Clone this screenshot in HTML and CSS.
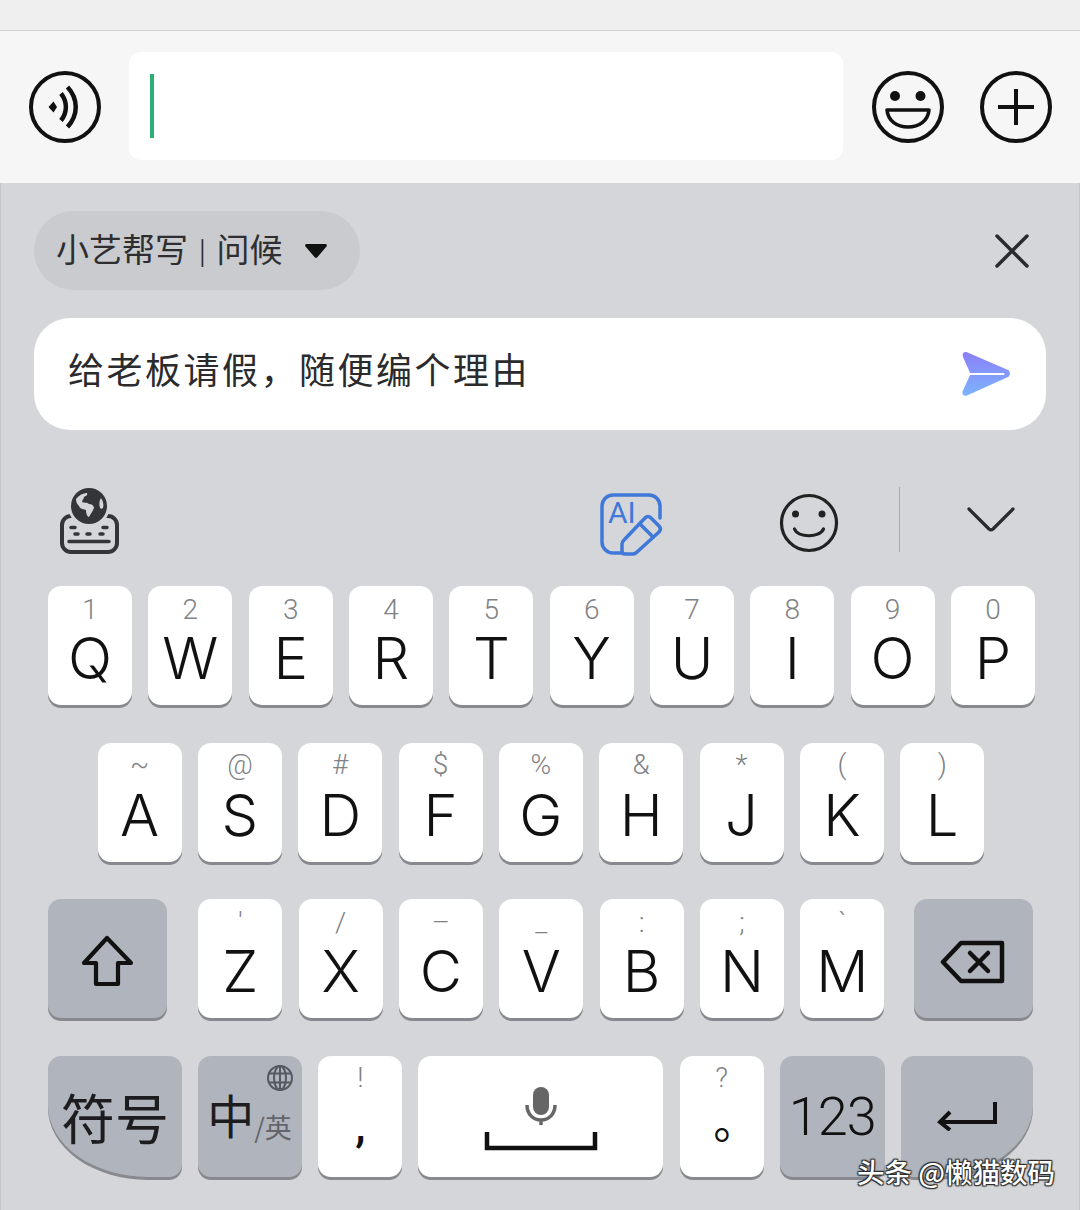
FILE: index.html
```html
<!DOCTYPE html>
<html lang="zh-CN">
<head>
    <meta charset="UTF-8">
    <meta name="viewport" content="width=device-width, initial-scale=1.0">
    <title>小艺帮写</title>
    <link rel="stylesheet" href="styles.css">
</head>
<body>
    <div class="top-strip"></div>

    <div class="chat-bar">
        <svg class="bar-icon voice" width="74" height="74" viewBox="0 0 74 74" fill="none" stroke="#111" stroke-width="4">
            <circle cx="37" cy="37" r="34"/>
            <path d="M25.500 31.500l3.500 5.500-3.500 5.500-5-5.500z" fill="#111" stroke="none"/>
            <path d="M33 23.500c6.500 8 6.500 19 0 27" stroke-width="4.500"/>
            <path d="M39.500 17c11 12 11 28 0 40" stroke-width="4.500"/>
        </svg>
        <div class="input-box"><span class="cursor"></span></div>
        <svg class="bar-icon grin" width="74" height="74" viewBox="0 0 74 74" fill="none" stroke="#111" stroke-width="4">
            <circle cx="37" cy="37" r="34"/>
            <circle cx="24" cy="26" r="5" fill="#111" stroke="none"/>
            <circle cx="49.500" cy="26" r="5" fill="#111" stroke="none"/>
            <path d="M16 40h42c-1 11-10 17-21 17s-20-6-21-17z" stroke-linejoin="round" stroke-width="3.500"/>
        </svg>
        <svg class="bar-icon plus" width="74" height="74" viewBox="0 0 74 74" fill="none" stroke="#111" stroke-width="4">
            <circle cx="37" cy="37" r="34"/>
            <path d="M19 37h36M37 19v36"/>
        </svg>
    </div>

    <div class="keyboard">
        <div class="assist-head">
            <div class="chip">
                <span class="chip-text">小艺帮写 <span class="chip-sep">|</span> 问候</span>
                <svg width="22" height="14" viewBox="0 0 22 14"><path d="M1.500 0h19a1.500 1.500 0 0 1 1 2.500L12.500 13a2 2 0 0 1-3 0L.5 2.500A1.500 1.500 0 0 1 1.500 0z" fill="#111"/></svg>
            </div>
            <svg class="close-icon" width="36" height="36" viewBox="0 0 36 36" fill="none" stroke="#2b2b2d" stroke-width="3.500" stroke-linecap="round">
                <path d="M3 3l30 30M33 3L3 33"/>
            </svg>
        </div>

        <div class="prompt">
            <span class="prompt-text">给老板请假，随便编个理由</span>
            <svg width="50" height="44" viewBox="0 0 50 44">
                <defs>
                    <linearGradient id="sendFill" x1="0" y1="0" x2="0" y2="1">
                        <stop offset="0" stop-color="#8a7ff6"/>
                        <stop offset="1" stop-color="#7db4ff"/>
                    </linearGradient>
                </defs>
                <path d="M1 1.500C2 0 3.500-.3 5 .3L46 18c2.500 1.200 2.500 5.800 0 7L5 43.500C3.200 44.300 1 43.500.5 41.500c-.2-1 0-2 .5-3L8.500 22 1 5c-.4-1.200-.4-2.500 0-3.500z" fill="url(#sendFill)"/>
                <path d="M8.500 22h33" stroke="#ffffff" stroke-width="2" stroke-linecap="round"/>
            </svg>
        </div>

        <div class="toolbar">
            <svg class="tool-kbd" width="62" height="68" viewBox="0 0 62 68" fill="none">
                <rect x="4" y="29" width="55" height="36" rx="9" stroke="#333538" stroke-width="4"/>
                <circle cx="31" cy="19" r="21" fill="#d4d6da"/>
                <circle cx="31" cy="19" r="18" fill="#333538"/>
                <path d="M18 12c3-4 7-6 11-6 1 2-1 3-3 4 0 2-2 3-2 5 2 1 5 0 7 2 3 0 5 2 5 4-1 3-3 5-5 9-2 0-3-4-3-7-3-1-6-1-7-4-2-2-3-4-3-7z" fill="#d4d6da"/>
                <path d="M43 11c2 3 3 6 2 10-1 1-2 1-3 0-1-4-1-7 1-10z" fill="#d4d6da"/>
                <path d="M13 40.500h4M45 40.500h4M17 47h3M29 47h3M42 47h3M11 54.500h40" stroke="#333538" stroke-width="3.500" stroke-linecap="round"/>
            </svg>
            <svg class="tool-ai" width="66" height="64" viewBox="0 0 66 64" fill="none" stroke="#3f78d9" stroke-width="3.500" stroke-linecap="round" stroke-linejoin="round">
                <path d="M22 60H13A11 11 0 0 1 2 49V13A11 11 0 0 1 13 2h36a11 11 0 0 1 11 11v12"/>
                <text class="ai-text" x="8" y="30">AI</text>
                <path d="M24 47l21-22c2-2 4-2 6 0l8 8c2 2 2 4 0 6L37 59c-1 1-2 2-4 2h-8c-2 0-3-1-3-3v-7c0-2 1-3 2-4z"/>
                <path d="M40 31l13 13"/>
            </svg>
            <svg class="tool-smile" width="60" height="60" viewBox="0 0 60 60" fill="none" stroke="#222" stroke-width="3.200" stroke-linecap="round">
                <circle cx="30" cy="30" r="27.500"/>
                <circle cx="16.500" cy="21" r="3.500" fill="#222" stroke="none"/>
                <circle cx="43" cy="21" r="3.500" fill="#222" stroke="none"/>
                <path d="M15.500 36c3.500 9 25 9 29 0"/>
            </svg>
            <span class="tool-line"></span>
            <svg class="tool-down" width="48" height="26" viewBox="0 0 48 26" fill="none" stroke="#2b2b2d" stroke-width="3.200" stroke-linecap="round" stroke-linejoin="round">
                <path d="M2 3l20 20c1.200 1 2.800 1 4 0L46 3"/>
            </svg>
        </div>

        <div class="keys">
            <div class="key-row">
                <div class="key"><span class="sub">1</span><span class="main">Q</span></div>
                <div class="key"><span class="sub">2</span><span class="main">W</span></div>
                <div class="key"><span class="sub">3</span><span class="main">E</span></div>
                <div class="key"><span class="sub">4</span><span class="main">R</span></div>
                <div class="key"><span class="sub">5</span><span class="main">T</span></div>
                <div class="key"><span class="sub">6</span><span class="main">Y</span></div>
                <div class="key"><span class="sub">7</span><span class="main">U</span></div>
                <div class="key"><span class="sub">8</span><span class="main">I</span></div>
                <div class="key"><span class="sub">9</span><span class="main">O</span></div>
                <div class="key"><span class="sub">0</span><span class="main">P</span></div>
            </div>
            <div class="key-row row-mid">
                <div class="key"><span class="sub">~</span><span class="main">A</span></div>
                <div class="key"><span class="sub">@</span><span class="main">S</span></div>
                <div class="key"><span class="sub">#</span><span class="main">D</span></div>
                <div class="key"><span class="sub">$</span><span class="main">F</span></div>
                <div class="key"><span class="sub">%</span><span class="main">G</span></div>
                <div class="key"><span class="sub">&amp;</span><span class="main">H</span></div>
                <div class="key"><span class="sub">*</span><span class="main">J</span></div>
                <div class="key"><span class="sub">(</span><span class="main">K</span></div>
                <div class="key"><span class="sub">)</span><span class="main">L</span></div>
            </div>
            <div class="key-row">
                <div class="key fn shift">
                    <svg width="54" height="52" viewBox="0 0 54 52" fill="none" stroke="#111" stroke-width="4.200" stroke-linejoin="round">
                        <path d="M26 3L3 28h12v21h22V28h13z"/>
                    </svg>
                </div>
                <div class="key"><span class="sub">'</span><span class="main">Z</span></div>
                <div class="key"><span class="sub">/</span><span class="main">X</span></div>
                <div class="key"><span class="sub">–</span><span class="main">C</span></div>
                <div class="key"><span class="sub">_</span><span class="main">V</span></div>
                <div class="key"><span class="sub">:</span><span class="main">B</span></div>
                <div class="key"><span class="sub">;</span><span class="main">N</span></div>
                <div class="key"><span class="sub">`</span><span class="main">M</span></div>
                <div class="key fn back">
                    <svg width="66" height="44" viewBox="0 0 66 44" fill="none" stroke="#111" stroke-width="4.500" stroke-linejoin="round" stroke-linecap="round">
                        <path d="M21 3h41v38H21L3 22z"/>
                        <path d="M30 13l18 18M48 13L30 31"/>
                    </svg>
                </div>
            </div>
            <div class="key-row row-last">
                <div class="key fn symbols">符号</div>
                <div class="key fn lang">
                    <svg class="lang-globe" width="28" height="28" viewBox="0 0 28 28" fill="none" stroke="#555960" stroke-width="2">
                        <circle cx="14" cy="14" r="12"/>
                        <ellipse cx="14" cy="14" rx="6" ry="12"/>
                        <path d="M14 2v24M3 9.500h22M3 18.500h22"/>
                    </svg>
                    <span class="lang-main">中</span><span class="lang-alt">/英</span>
                </div>
                <div class="key"><span class="sub sub-tall">!</span><span class="punct">,</span></div>
                <div class="key space">
                    <svg width="116" height="66" viewBox="0 0 116 66" fill="none">
                        <rect x="50" y="2" width="16" height="28" rx="8" fill="#666"/>
                        <path d="M44 20c0 9 6 15 14 15s14-6 14-15M58 35v5" stroke="#666" stroke-width="3.500"/>
                        <path d="M4 47v16h108V47" stroke="#111" stroke-width="4.500"/>
                    </svg>
                </div>
                <div class="key"><span class="sub sub-tall">?</span><span class="punct stop">。</span></div>
                <div class="key fn num">123</div>
                <div class="key fn enter">
                    <svg width="60" height="30" viewBox="0 0 60 30" fill="none" stroke="#111" stroke-width="4" stroke-linejoin="miter">
                        <path d="M58 1v20H4"/>
                        <path d="M13 11L3 21l10 8"/>
                    </svg>
                </div>
            </div>
        </div>

        <div class="watermark">头条 @懒猫数码</div>
    </div>
</body>
</html>
```

FILE: styles.css
```css
body {
    margin: 0;
    padding: 0;
    width: 1080px;
    height: 1210px;
    overflow: hidden;
    font-family: "Noto Sans CJK SC", "Noto Sans", sans-serif;
    background-color: #d4d6da;
}

.top-strip {
    height: 30px;
    background: #efefef;
    border-bottom: 1px solid #d2d2d2;
}

/* chat input */
.chat-bar {
    height: 152px;
    background: #f6f6f6;
    display: flex;
    align-items: center;
    box-sizing: border-box;
    padding-left: 28px;
}

.bar-icon {
    flex: none;
}

.input-box {
    width: 714px;
    height: 108px;
    margin: 0 28px 2px 27px;
    background: #ffffff;
    border-radius: 12px;
    display: flex;
    align-items: center;
    padding-left: 21px;
    box-sizing: border-box;
}

.cursor {
    width: 4px;
    height: 64px;
    background: #2fae74;
}

.plus {
    margin-left: 34px;
}

/* keyboard panel */
.keyboard {
    position: relative;
    height: 1027px;
    background: #d4d6da;
    box-shadow: inset 1px 0 0 #c4c6ca, inset -1px 0 0 #c4c6ca;
}

.assist-head {
    height: 135px;
    box-sizing: border-box;
    padding: 28px 50px 0 34px;
    display: flex;
    justify-content: space-between;
    align-items: flex-start;
}

.chip {
    width: 326px;
    height: 79px;
    box-sizing: border-box;
    padding-left: 22px;
    background: #c9cbcf;
    border-radius: 40px;
    display: flex;
    align-items: center;
}

.chip-text {
    font-size: 33px;
    word-spacing: 2px;
    color: #2e2e30;
    width: 249px;
    white-space: pre;
    padding-bottom: 5px;
}

.chip-sep {
    font-size: 25px;
    margin: 0 1.5px;
    vertical-align: 2px;
}

.close-icon {
    margin-top: 22px;
}

.prompt {
    width: 1012px;
    height: 112px;
    margin-left: 34px;
    box-sizing: border-box;
    padding: 0 34px;
    background: #ffffff;
    border-radius: 36px;
    display: flex;
    align-items: center;
    justify-content: space-between;
}

.prompt-text {
    font-size: 36px;
    letter-spacing: 2.5px;
    color: #2b2b2d;
    padding-bottom: 12px;
}

.toolbar {
    height: 156px;
    box-sizing: border-box;
    padding: 57px 0 0 58px;
    display: flex;
    align-items: flex-start;
}

.tool-ai {
    margin-left: 480px;
    margin-top: 6px;
}

.tool-smile {
    margin-left: 113px;
    margin-top: 6px;
}

.tool-line {
    width: 1px;
    height: 65px;
    background: #a9abaf;
    margin-left: 60px;
}

.tool-down {
    margin-left: 67px;
    margin-top: 19px;
}

.ai-text {
    font-family: Roboto, sans-serif;
    font-size: 30px;
    font-weight: 400;
    fill: #3f78d9;
    stroke: none;
}

/* key grid */
.keys {
    display: flex;
    flex-direction: column;
    gap: 34.67px;
    padding-left: 48px;
}

.key-row {
    display: flex;
    gap: 16.33px;
    height: 122px;
}

.row-mid {
    padding-left: 49.6px;
}

.row-mid .sub {
    margin-top: 6px;
    margin-bottom: 2px;
}

.row-last {
    gap: 16.17px;
    height: 124px;
}

.key {
    width: 84px;
    height: 119px;
    flex: none;
    background: #ffffff;
    border-radius: 13px;
    box-shadow: 0 3px 0 #87898e;
    display: flex;
    flex-direction: column;
    align-items: center;
    font-family: Roboto, "Noto Sans CJK SC", sans-serif;
    color: #111;
}

.row-last .key {
    height: 121px;
}

.sub {
    height: 31px;
    margin-top: 8px;
    font-size: 28px;
    line-height: 31px;
    font-weight: 300;
    color: #808285;
}

.sub-tall {
    margin-top: 6px;
}

.main {
    font-family: Inter, Roboto, sans-serif;
    font-size: 58px;
    line-height: 67px;
    font-weight: 300;
}

.punct {
    font-size: 46px;
    line-height: 54px;
    font-weight: 500;
    margin-top: 5px;
}

.stop {
    font-family: "Noto Sans CJK TC", sans-serif;
    font-size: 44px;
    font-weight: 400;
    margin-top: 13px;
}

.fn {
    background: #b0b4bd;
    justify-content: center;
    align-items: center;
}

.shift {
    width: 119px;
    margin-right: 15px;
    padding-top: 4px;
    box-sizing: border-box;
}

.back {
    width: 119px;
    margin-left: 13px;
    padding-top: 6px;
    box-sizing: border-box;
}

.symbols {
    width: 134px;
    font-family: "Noto Sans CJK SC", sans-serif;
    font-size: 54px;
    font-weight: 400;
    color: #1d1d1f;
    border-bottom-left-radius: 100px 72px;
}

.lang {
    width: 104px;
    position: relative;
    flex-direction: row;
    align-items: flex-start;
    justify-content: flex-start;
    padding: 23px 0 0 9px;
    box-sizing: border-box;
    font-family: "Noto Sans CJK SC", sans-serif;
}

.lang-globe {
    position: absolute;
    top: 8px;
    right: 8px;
}

.lang-main {
    font-size: 47px;
    color: #1d1d1f;
}

.lang-alt {
    font-size: 27px;
    color: #62656b;
    margin-top: 28px;
}

.space {
    width: 245px;
    justify-content: center;
    padding-top: 3px;
    box-sizing: border-box;
}

.num {
    width: 105px;
    font-size: 54px;
    font-weight: 300;
    letter-spacing: -1px;
}

.enter {
    width: 132px;
    border-bottom-right-radius: 100px 72px;
    box-sizing: border-box;
}

.watermark {
    position: absolute;
    right: 25px;
    bottom: 22px;
    font-size: 27.5px;
    font-weight: 500;
    line-height: 34px;
    color: #ffffff;
    text-shadow: 0 0 2px #222, 1px 1px 1px #333, -1px -1px 1px #333, 1px -1px 1px #333, -1px 1px 1px #333;
}
```
